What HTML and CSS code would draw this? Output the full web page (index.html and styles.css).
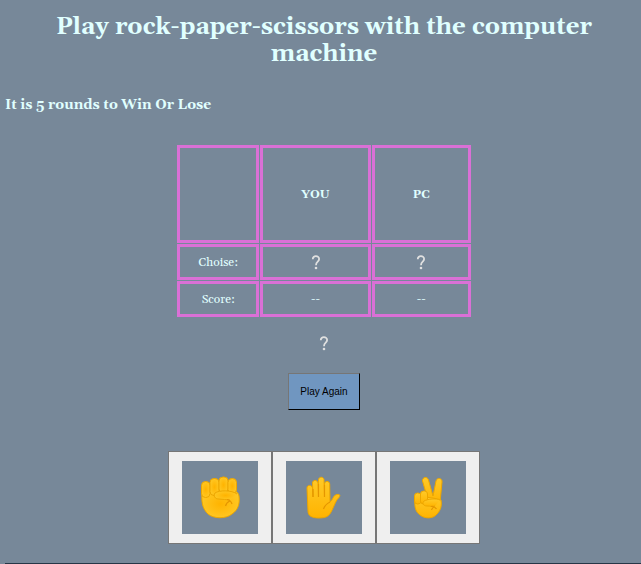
FILE: index.html
```html
<!DOCTYPE html>
<html lang="en">
<head>
<meta charset="utf-8">
<title>Rock Paper Scissors</title>
<link rel="stylesheet" href="styles.css">
</head>
<body>
<svg class="defs" aria-hidden="true">
  <defs>
    <radialGradient id="skin" cx="50%" cy="50%" r="60%">
      <stop offset="0" stop-color="#ffb300"/>
      <stop offset="1" stop-color="#ffca28"/>
    </radialGradient>
    <linearGradient id="palm" x1="0" y1="0" x2="0" y2="1">
      <stop offset="0" stop-color="#ffca28"/>
      <stop offset="1" stop-color="#ffb300"/>
    </linearGradient>
    <symbol id="question" viewBox="0 0 10 15">
      <path d="M1.800 4.300C1.500 0.200 8.200 0.200 8.100 4C8.100 6.900 5 6.500 5 10.200" fill="none" stroke="#e0e0e0" stroke-width="1.800"/>
      <circle cx="5" cy="13" r="1.300" fill="#e0e0e0"/>
    </symbol>
  </defs>
</svg>
<main class="game">
  <h1 class="title">Play rock-paper-scissors with the computer machine</h1>
  <h2 class="rules">It is 5 rounds to Win Or Lose</h2>
  <table class="board">
    <thead>
      <tr><td></td><th scope="col">YOU</th><th scope="col">PC</th></tr>
    </thead>
    <tbody>
      <tr>
        <td>Choise:</td>
        <td><svg class="mark" role="img" aria-label="Not chosen"><use href="#question"/></svg></td>
        <td><svg class="mark" role="img" aria-label="Not chosen"><use href="#question"/></svg></td>
      </tr>
      <tr><td>Score:</td><td>--</td><td>--</td></tr>
    </tbody>
  </table>
  <div class="result"><svg class="mark" role="img" aria-label="No result"><use href="#question"/></svg></div>
  <button class="again" type="button">Play Again</button>
  <div class="choices">
    <button class="choice" type="button" aria-label="Rock"><span class="tile">
      <svg class="hand" viewBox="-1 0 42 44">
        <g fill="url(#skin)" stroke="#eda600" stroke-width="1">
          <path d="M2 17C1 29 4 34 8 38C14 43 26 43 32 38C38 34 40 28 39 20C38 15 34 14 29 14L4 15Z"/>
          <rect x="1.500" y="5.500" width="8.500" height="16" rx="4"/>
          <rect x="10" y="2.500" width="9" height="17" rx="4"/>
          <rect x="19" y="1" width="9" height="16" rx="4"/>
          <rect x="28" y="2.500" width="8.500" height="15" rx="4"/>
          <path d="M37 18C32 14 19 14 15 17C13 20 15 23 19 23C23 23 26 24 30 24"/>
        </g>
        <path d="M27 23.500C30 24 31 25 32 28M30 25C27 26 26 28 25.500 30" fill="none" stroke="#e59600" stroke-width="1.200"/>
      </svg></span></button><button class="choice" type="button" aria-label="Paper"><span class="tile">
      <svg class="hand" viewBox="-1 0 42 44">
        <path d="M4 35L3 12C3 8.500 8 8.500 8.500 12L9 21L8.500 7C8.500 3.500 13.500 3.500 14 7L14.500 21L14.500 3.500C15 0.500 19.500 0.500 20 3.500L20.500 21L20.500 8C20.500 4.500 25.500 4.500 25.700 8L26 26C29 24 29 19 33 18.500C36 18 36.500 19.500 35 21.500C32 24 31 28 29 32C26 39 24 42 15 42C8 42 4 40 4 35Z" fill="url(#palm)" stroke="#eda600" stroke-width="1"/>
        <path d="M26 26C22 28 20.500 30 19.500 33M9 13V21M14.500 8V21M20.500 9V21" fill="none" stroke="#e59600" stroke-width="1.200"/>
      </svg></span></button><button class="choice" type="button" aria-label="Scissors"><span class="tile">
      <svg class="hand" viewBox="-4 0 42 44">
        <g fill="url(#palm)" stroke="#eda600" stroke-width="1">
          <path d="M17 24L11.500 5C11 1 16.500 0 17.500 4L22 20L25 5C26 1 31.500 2 31 6L29 27Z"/>
          <path d="M4 22C3 32 5 36 9 39C14 43 22 43 26 38C30 34 31 29 30 24L22 22L6 20Z"/>
          <rect x="3.500" y="17" width="6.500" height="11" rx="3"/>
          <rect x="9.500" y="15" width="7" height="13" rx="3"/>
          <path d="M29 24C25 22 17 23 13 25C11 27 12 30 16 30C20 30 20 31 24 30"/>
        </g>
        <path d="M20 30.500C23 29.500 24 31 25.500 33M23 31C21.500 31.500 21 33 20.500 34" fill="none" stroke="#e59600" stroke-width="1.200"/>
      </svg></span></button>
  </div>
  <hr class="rule">
</main>
</body>
</html>
```
FILE: styles.css
```css
html {
  overflow: hidden;
  background: #778899;
}

body {
  margin: 0 -2px 0 5px;
  color: #e0ffff;
  font-family: Georgia, Gelasio, "Liberation Serif", serif;
  font-size: 12px;
}

.defs {
  display: block;
  width: 0;
  height: 0;
}

.game {
  display: flex;
  flex-direction: column;
  align-items: center;
}

.title {
  margin: 14px 0 0;
  font-size: 24px;
  line-height: 27px;
  text-align: center;
}

.rules {
  align-self: flex-start;
  margin: 27px 0 0;
  font-size: 14px;
  line-height: 20px;
}

.board {
  margin-top: 29px;
  border-spacing: 1px;
  text-align: center;
}

.board td,
.board th {
  height: 29px;
  padding: 1px 18px;
  border: 3px solid #da70d6;
}

.board thead td,
.board thead th {
  height: 90px;
  padding: 1px 38px;
}

.board tbody td {
  height: 28px;
}

.mark {
  display: block;
  width: 10px;
  height: 15px;
  margin: 0 auto;
}

.result {
  margin-top: 18px;
}

.again {
  height: 37px;
  margin-top: 22px;
  padding: 0 11px;
  border: 1px outset #767676;
  border-color: #767676 #1c2229 #1c2229 #767676;
  background: #7096c0;
  color: #000;
  font: 10px "Liberation Sans", Arial, sans-serif;
}

.choices {
  display: flex;
  margin-top: 41px;
}

.choice {
  padding: 9px 13px;
  border: 1px solid #767676;
  background: #efefef;
}

.tile {
  display: flex;
  align-items: center;
  justify-content: center;
  width: 76px;
  height: 73px;
  background: #778899;
}

.hand {
  width: 42px;
  height: 44px;
}

.rule {
  align-self: stretch;
  height: 1px;
  margin: 19px 0 0;
  border: 0;
  background: #263646;
}
```
